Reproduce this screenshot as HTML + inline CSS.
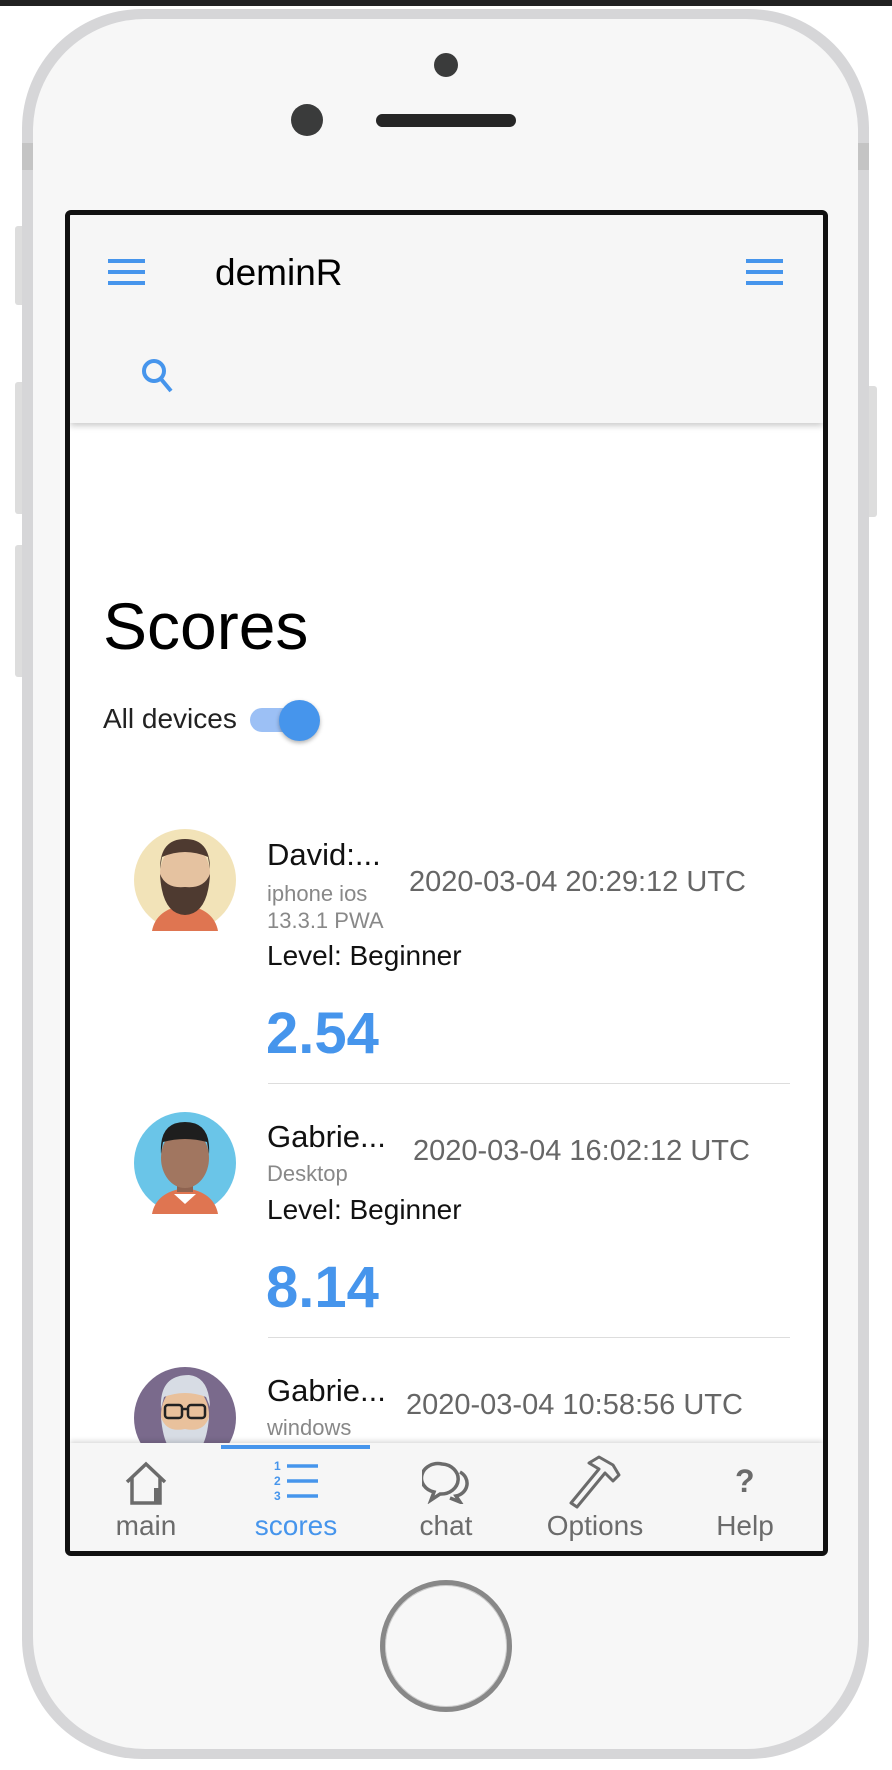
<!DOCTYPE html>
<html><head><meta charset="utf-8"><style>
*{margin:0;padding:0;box-sizing:border-box}
body{width:892px;height:1770px;background:#fff;position:relative;overflow:hidden;font-family:"Liberation Sans",Arial,sans-serif}
.a{position:absolute}
.t{position:absolute;white-space:nowrap;line-height:1}
.tab{position:absolute;width:150px;text-align:center;top:1297px;font-size:28px;color:#6b6b6b;line-height:1}
.ic{position:absolute;top:1245px}
</style></head><body>
<div class="a" style="left:0;top:0;width:892px;height:6px;background:#222"></div>
<div class="a" style="left:15px;top:226px;width:10px;height:79px;background:#ddd;border-radius:3px"></div>
<div class="a" style="left:15px;top:382px;width:10px;height:132px;background:#ddd;border-radius:3px"></div>
<div class="a" style="left:15px;top:545px;width:10px;height:132px;background:#ddd;border-radius:3px"></div>
<div class="a" style="left:866px;top:386px;width:11px;height:131px;background:#ddd;border-radius:3px"></div>
<div class="a" style="left:22px;top:9px;width:847px;height:1750px;border-radius:120px;background:#d6d6d8"></div>
<div class="a" style="left:33px;top:19px;width:825px;height:1730px;border-radius:112px;background:#f7f7f7"></div>
<div class="a" style="left:22px;top:143px;width:11px;height:27px;background:#c4c4c4"></div>
<div class="a" style="left:858px;top:143px;width:11px;height:27px;background:#c4c4c4"></div>
<div class="a" style="left:434px;top:53px;width:24px;height:24px;border-radius:50%;background:#3a3b3b"></div>
<div class="a" style="left:291px;top:104px;width:32px;height:32px;border-radius:50%;background:#3a3b3b"></div>
<div class="a" style="left:376px;top:114px;width:140px;height:13px;border-radius:7px;background:#262626"></div>
<div class="a" style="left:380px;top:1580px;width:132px;height:132px;border-radius:50%;border:5px solid #888;background:#f7f7f7;box-shadow:inset 0 0 0 1px #ccc"></div>
<!-- screen -->
<div class="a" style="left:65px;top:210px;width:763px;height:1346px;border:5px solid #111;border-radius:6px;background:#fff;overflow:hidden">
 <div class="a" style="left:0;top:0;width:753px;height:208px;background:#f6f6f6;box-shadow:0 3px 6px rgba(0,0,0,.2)"></div>
 <svg class="a" style="left:38px;top:44px" width="37" height="26"><g fill="#4695ec"><rect y="0" width="37" height="4"/><rect y="11" width="37" height="4"/><rect y="22" width="37" height="4"/></g></svg>
 <svg class="a" style="left:676px;top:44px" width="37" height="26"><g fill="#4695ec"><rect y="0" width="37" height="4"/><rect y="11" width="37" height="4"/><rect y="22" width="37" height="4"/></g></svg>
 <div class="t" style="left:145px;top:39px;font-size:37px;color:#000">deminR</div>
 <svg class="a" style="left:70px;top:143px" width="36" height="36" viewBox="0 0 34 36"><circle cx="13" cy="13" r="10" fill="none" stroke="#4695ec" stroke-width="4"/><line x1="20" y1="21" x2="30" y2="33" stroke="#4695ec" stroke-width="4"/></svg>
 <div class="t" style="left:33px;top:378px;font-size:66px;color:#000">Scores</div>
 <div class="t" style="left:33px;top:490px;font-size:28px;color:#222">All devices</div>
 <div class="a" style="left:180px;top:493px;width:66px;height:24px;border-radius:12px;background:#9cc0f5"></div>
 <div class="a" style="left:209px;top:485px;width:41px;height:41px;border-radius:50%;background:#4695ec;box-shadow:0 2px 4px rgba(0,0,0,.3)"></div>

 <!-- item1 -->
 <svg class="a" style="left:64px;top:614px" width="102" height="102" viewBox="0 0 102 102"><circle cx="51" cy="51" r="51" fill="#f2e3b8"/><path d="M18 102 Q22 80 51 76 Q80 80 84 102Z" fill="#df7551"/><rect x="43" y="64" width="16" height="16" fill="#e5b794"/><ellipse cx="51" cy="45" rx="25" ry="30" fill="#e5c2a0"/><path d="M26 40 Q26 10 51 10 Q76 10 76 40 L74 28 Q51 18 28 28Z" fill="#4e3a30"/><path d="M26 45 Q28 85 51 86 Q74 85 76 45 Q70 60 51 58 Q32 60 26 45Z" fill="#4e3a30"/></svg>
 <div class="t" style="left:197px;top:624px;font-size:31px;color:#111">David:...</div>
 <div class="t" style="left:197px;top:665px;font-size:22px;color:#888;line-height:27px">iphone ios<br>13.3.1 PWA</div>
 <div class="t" style="left:339px;top:653px;font-size:29px;color:#666">2020-03-04 20:29:12 UTC</div>
 <div class="t" style="left:197px;top:727px;font-size:28px;color:#111">Level: Beginner</div>
 <div class="t" style="left:196px;top:790px;font-size:58px;font-weight:bold;color:#4695ec">2.54</div>
 <div class="a" style="left:198px;top:868px;width:522px;height:1px;background:#ddd"></div>

 <!-- item2 -->
 <svg class="a" style="left:64px;top:897px" width="102" height="102" viewBox="0 0 102 102"><circle cx="51" cy="51" r="51" fill="#6ac5e8"/><path d="M18 102 Q22 80 51 76 Q80 80 84 102Z" fill="#df7551"/><path d="M40 82 L51 92 L62 82Z" fill="#fff"/><rect x="43" y="62" width="16" height="18" fill="#8e6350"/><ellipse cx="51" cy="46" rx="24" ry="30" fill="#a17660"/><path d="M27 42 Q25 10 51 10 Q77 10 75 42 L73 30 Q51 24 29 30Z" fill="#1e1e1e"/></svg>
 <div class="t" style="left:197px;top:906px;font-size:31px;color:#111">Gabrie...</div>
 <div class="t" style="left:197px;top:948px;font-size:22px;color:#888">Desktop</div>
 <div class="t" style="left:343px;top:922px;font-size:29px;color:#666">2020-03-04 16:02:12 UTC</div>
 <div class="t" style="left:197px;top:981px;font-size:28px;color:#111">Level: Beginner</div>
 <div class="t" style="left:196px;top:1044px;font-size:58px;font-weight:bold;color:#4695ec">8.14</div>
 <div class="a" style="left:198px;top:1122px;width:522px;height:1px;background:#ddd"></div>

 <!-- item3 -->
 <svg class="a" style="left:64px;top:1152px" width="102" height="102" viewBox="0 0 102 102"><circle cx="51" cy="51" r="51" fill="#7a6a8c"/><ellipse cx="51" cy="48" rx="24" ry="30" fill="#e9c19c"/><path d="M27 42 Q25 8 55 8 Q75 10 76 40 L72 30 Q51 22 30 30Z" fill="#d7dce4"/><path d="M27 50 Q30 90 51 90 Q72 90 75 50 Q70 66 51 62 Q32 66 27 50Z" fill="#d7dce4"/><g fill="none" stroke="#222" stroke-width="2.5"><rect x="31" y="38" width="17" height="13" rx="3"/><rect x="54" y="38" width="17" height="13" rx="3"/><line x1="48" y1="42" x2="54" y2="42"/></g></svg>
 <div class="t" style="left:197px;top:1160px;font-size:31px;color:#111">Gabrie...</div>
 <div class="t" style="left:197px;top:1202px;font-size:22px;color:#888">windows</div>
 <div class="t" style="left:336px;top:1176px;font-size:29px;color:#666">2020-03-04 10:58:56 UTC</div>

 <!-- tab bar -->
 <div class="a" style="left:0;top:1228px;width:753px;height:108px;background:#f6f6f6;box-shadow:0 -2px 5px rgba(0,0,0,.15)"></div>
 <div class="a" style="left:151px;top:1230px;width:149px;height:4px;background:#4695ec"></div>
 <svg class="ic" style="left:53px" width="46" height="46" viewBox="0 0 46 46"><path d="M4 22 L23 4 L42 22 M9 17 V43 H37 V17" fill="none" stroke="#6b6b6b" stroke-width="3.5"/><rect x="31" y="28" width="5" height="15" fill="#6b6b6b"/></svg>
 <div class="tab" style="left:1px">main</div>
 <svg class="ic" style="left:202px" width="48" height="44" viewBox="0 0 48 44"><g fill="#4695ec" font-family="Liberation Sans" font-weight="bold" font-size="12"><text x="2" y="10">1</text><text x="2" y="25">2</text><text x="2" y="40">3</text></g><g stroke="#4695ec" stroke-width="3.5"><line x1="15" y1="6" x2="46" y2="6"/><line x1="15" y1="21" x2="46" y2="21"/><line x1="15" y1="36" x2="46" y2="36"/></g></svg>
 <div class="tab" style="left:151px;color:#4695ec">scores</div>
 <svg class="ic" style="left:352px" width="48" height="44" viewBox="0 0 48 44"><path d="M20 4 A16 14 0 1 0 12 32 L9 40 L18 34 A16 14 0 0 0 20 4Z" fill="none" stroke="#6b6b6b" stroke-width="3.5"/><path d="M38 12 A14 13 0 0 1 34 36 L38 42 L28 38" fill="none" stroke="#6b6b6b" stroke-width="3.5"/></svg>
 <div class="tab" style="left:301px">chat</div>
 <svg class="ic" style="left:499px;top:1240px" width="52" height="56" viewBox="0 0 52 56"><path d="M20 8 L30 2 L44 10 L50 20 L44 26 L36 18 L8 52 L2 48 L30 14 Z" fill="none" stroke="#6b6b6b" stroke-width="3" stroke-linejoin="round"/></svg>
 <div class="tab" style="left:450px">Options</div>
 <div class="t" style="left:665px;top:1250px;font-size:32px;font-weight:bold;color:#6b6b6b">?</div>
 <div class="tab" style="left:600px">Help</div>
</div>
</body></html>
